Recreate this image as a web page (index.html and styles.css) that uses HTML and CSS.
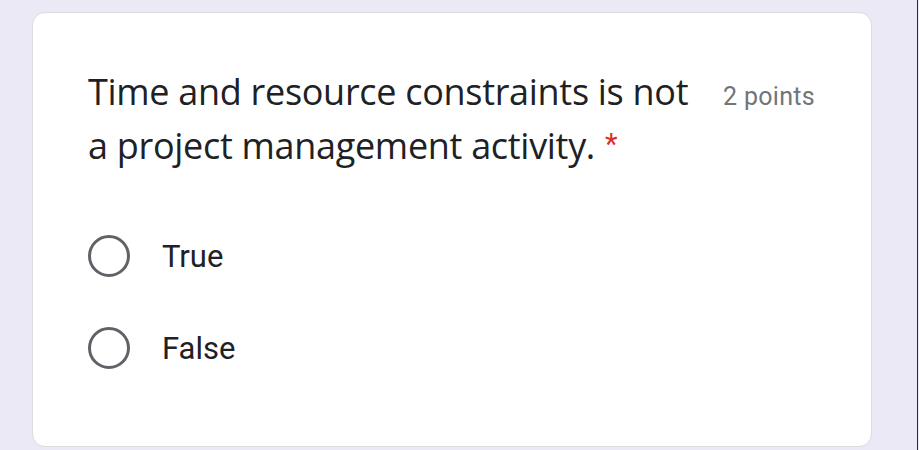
FILE: index.html
```html
<!DOCTYPE html>
<html lang="en">
<head>
<meta charset="utf-8">
<link rel="stylesheet" href="styles.css">
</head>
<body>
<div class="page">
  <div class="card">
    <div class="header">
      <div class="title">Time and resource constraints is not a project management activity.<span class="req">*</span></div>
      <div class="points">2 points</div>
    </div>
    <div class="options">
      <label class="option"><span class="radio"></span><span class="label">True</span></label>
      <label class="option"><span class="radio"></span><span class="label">False</span></label>
    </div>
  </div>
</div>
</body>
</html>
```
FILE: styles.css
```css
html, body {
  margin: 0;
  padding: 0;
  background: #ebe9f6;
}
.page {
  width: 918px;
  height: 450px;
  border-right: 1px solid #2a2a2a;
  padding: 12px 0 0 32px;
  box-sizing: border-box;
}
.card {
  width: 840px;
  height: 435px;
  box-sizing: border-box;
  background: #fff;
  border-radius: 13px;
  border: 1px solid #dadce0;
  padding: 52px 56px 0 55px;
}
.header {
  display: flex;
  align-items: baseline;
  justify-content: space-between;
}
.title {
  width: 615px;
  font-family: "Open Sans", sans-serif;
  font-size: 36px;
  line-height: 54px;
  color: #202124;
  letter-spacing: -0.3px;
}
.req {
  display: inline-block;
  font-family: Roboto, sans-serif;
  color: #d93025;
  font-size: 29px;
  line-height: 1;
  letter-spacing: 0;
  margin-left: 10px;
  vertical-align: 5px;
}
.points {
  font-family: Roboto, sans-serif;
  font-size: 25px;
  letter-spacing: 0.3px;
  color: #70757a;
  line-height: 54px;
}
.options {
  display: flex;
  flex-direction: column;
  gap: 48px;
  margin-top: 61px;
}
.option {
  display: flex;
  align-items: center;
  gap: 32px;
  height: 44px;
}
.radio {
  width: 42px;
  height: 42px;
  box-sizing: border-box;
  border: 3.5px solid #5f6368;
  border-radius: 50%;
}
.label {
  font-family: Roboto, sans-serif;
  font-size: 31px;
  color: #202124;
}
```
